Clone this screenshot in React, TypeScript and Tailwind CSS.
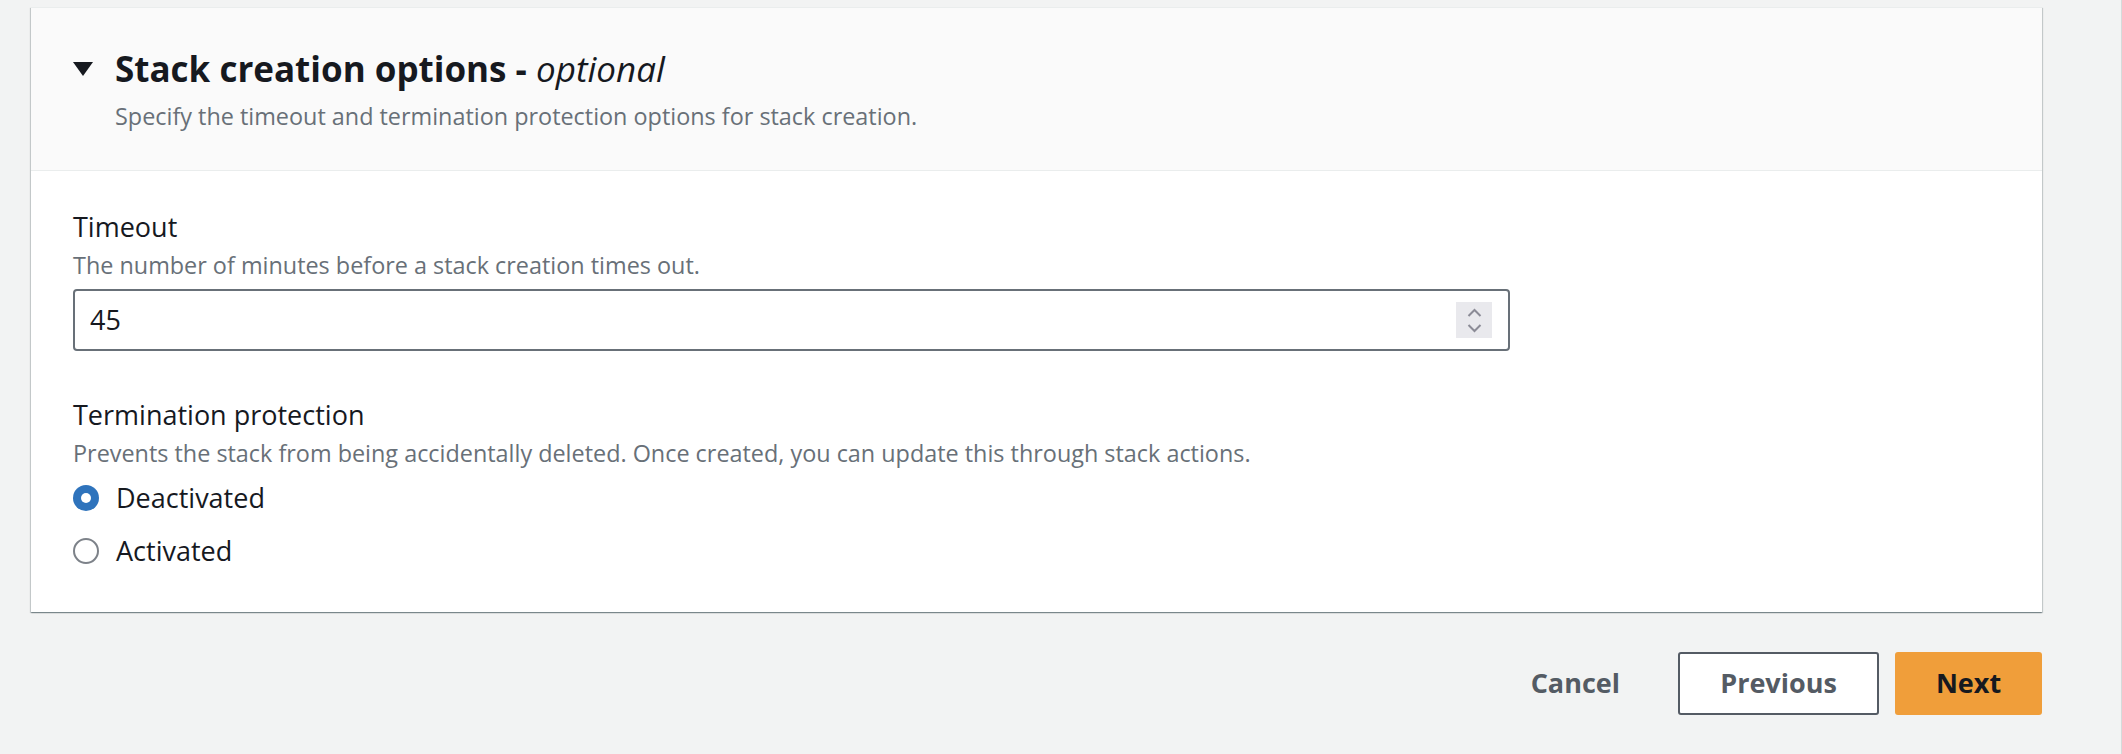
import { useState } from 'react';

function Caret() {
  return (
    <svg width="20" height="14" viewBox="0 0 20 14" className="shrink-0">
      <polygon points="0,0 20,0 10,14" fill="#16191f" />
    </svg>
  );
}

function Spinner() {
  return (
    <div className="w-9 h-9 bg-[#e9e9ed] flex flex-col items-center justify-center gap-[7px]">
      <svg width="15" height="9" viewBox="0 0 15 9">
        <polyline points="1.5,8 7.5,2 13.5,8" fill="none" stroke="#8b8b96" strokeWidth="2" />
      </svg>
      <svg width="15" height="9" viewBox="0 0 15 9">
        <polyline points="1.5,1 7.5,7 13.5,1" fill="none" stroke="#8b8b96" strokeWidth="2" />
      </svg>
    </div>
  );
}

function Radio({ checked, label, onClick }: { checked: boolean; label: string; onClick: () => void }) {
  return (
    <button onClick={onClick} className="flex items-center h-10 text-left">
      {checked ? (
        <span className="w-[26px] h-[26px] rounded-full bg-[#2e73bc] flex items-center justify-center">
          <span className="w-[10px] h-[10px] rounded-full bg-white" />
        </span>
      ) : (
        <span className="w-[26px] h-[26px] rounded-full border-2 border-[#7d8289] bg-white" />
      )}
      <span className="ml-[17px] text-[27px] leading-[40px] text-[#16191f]">{label}</span>
    </button>
  );
}

export default function App() {
  const [timeout, setTimeoutValue] = useState('45');
  const [protection, setProtection] = useState<'off' | 'on'>('off');

  return (
    <div className="w-full h-[754px] bg-[#f2f3f3] border-r border-[#d5dbdb] font-['Open_Sans',sans-serif] pt-[7px] pl-[31px]">
      <div className="w-[2011px]">
        {/* Container */}
        <div className="bg-white border-t border-[#eaeded] shadow-[0_1px_1px_0_rgba(0,28,36,0.3),1px_1px_1px_0_rgba(0,28,36,0.15),-1px_1px_1px_0_rgba(0,28,36,0.15)]">
          <div className="bg-[#fafafa] border-b border-[#eaeded] pt-[39px] pb-[38px] pl-[42px]">
            <div className="flex items-center h-11">
              <Caret />
              <h2 className="ml-[22px] text-[35px] leading-[44px] font-bold text-[#16191f]">
                Stack creation options - <i className="font-normal">optional</i>
              </h2>
            </div>
            <p className="mt-[9px] ml-[42px] text-[23.4px] leading-[32px] text-[#687078]">
              Specify the timeout and termination protection options for stack creation.
            </p>
          </div>

          <div className="pt-[38px] pb-[41px] px-[42px]">
            <label className="block text-[27px] leading-[36px] text-[#16191f]">Timeout</label>
            <p className="mt-1 text-[23.4px] leading-[32px] text-[#687078]">
              The number of minutes before a stack creation times out.
            </p>
            <div className="mt-2 w-[1437px] h-[62px] border-2 border-[#687078] rounded-[4px] flex items-center pl-[15px] pr-[16px]">
              <input
                value={timeout}
                onChange={(e) => setTimeoutValue(e.target.value)}
                className="flex-1 outline-none text-[27px] text-[#16191f] bg-transparent"
              />
              <Spinner />
            </div>

            <label className="block mt-[46px] text-[27px] leading-[36px] text-[#16191f]">Termination protection</label>
            <p className="mt-1 text-[23.4px] leading-[32px] text-[#687078]">
              Prevents the stack from being accidentally deleted. Once created, you can update this through stack actions.
            </p>
            <div className="mt-[9px] flex flex-col gap-[13px]">
              <Radio checked={protection === 'off'} label="Deactivated" onClick={() => setProtection('off')} />
              <Radio checked={protection === 'on'} label="Activated" onClick={() => setProtection('on')} />
            </div>
          </div>
        </div>

        {/* Wizard actions */}
        <div className="mt-10 flex justify-end items-center">
          <button className="h-[63px] px-[30px] text-[27px] font-bold text-[#545b64]">Cancel</button>
          <button className="ml-[28px] h-[63px] w-[201px] border-2 border-[#545b64] rounded-[3px] bg-white text-[27px] font-bold text-[#545b64]">
            Previous
          </button>
          <button className="ml-4 h-[63px] w-[147px] rounded-[3px] bg-[#f09e3a] text-[27px] font-bold text-[#16191f]">
            Next
          </button>
        </div>
      </div>
    </div>
  );
}
